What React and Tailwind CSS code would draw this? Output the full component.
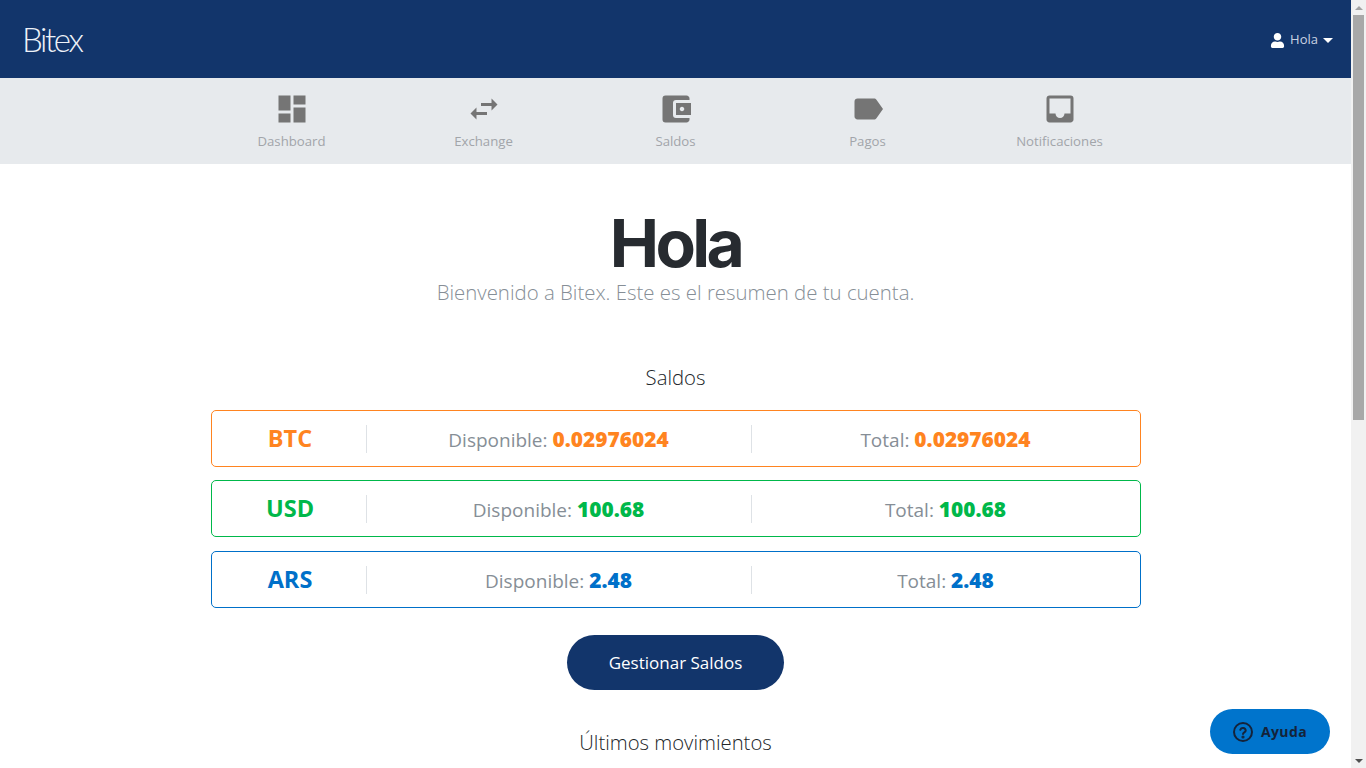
import React from "react";
import { MdDashboard, MdSwapHoriz, MdAccountBalanceWallet, MdLabel, MdInbox } from "react-icons/md";
import { FaUser } from "react-icons/fa";

const nav = [
  ["Dashboard", MdDashboard],
  ["Exchange", MdSwapHoriz],
  ["Saldos", MdAccountBalanceWallet],
  ["Pagos", MdLabel],
  ["Notificaciones", MdInbox],
];

const rows = [
  { c: "BTC", v: "0.02976024", border: "border-[#ff8420] mb-[13px]", text: "text-[#ff8420]" },
  { c: "USD", v: "100.68", border: "border-[#00b84a] mb-[14px]", text: "text-[#00b84a]" },
  { c: "ARS", v: "2.48", border: "border-[#0070c9]", text: "text-[#0070c9]" },
];

export default function App() {
  return (
    <div className="h-screen overflow-hidden pr-[15px] bg-white font-['Open_Sans',sans-serif]">
      <header className="h-[78px] bg-[#12356b] flex items-center justify-between pl-[22px] pr-[18px]">
        <span className="font-['Lato',sans-serif] font-light text-[33px] leading-none tracking-[-2.4px] text-[#eef2f8]">Bitex</span>
        <div className="flex items-center text-white text-[13px] mt-[2px]">
          <FaUser size={15} className="mr-[5px]" />
          <span className="text-[#c9d3e2]">Hola</span>
          <span className="ml-[5px] w-0 h-0 border-x-[5px] border-x-transparent border-t-[5px] border-t-white" />
        </div>
      </header>
      <nav className="h-[86px] bg-[#e7eaed] flex justify-center">
        {nav.map(([label, Icon]) => (
          <div key={label} className="w-[192px] flex flex-col items-center pt-[13px]">
            <Icon size={36} className="text-[#757575]" />
            <span className="text-[13.2px] leading-[18px] mt-[5px] text-[#a2a5aa]">{label}</span>
          </div>
        ))}
      </nav>
      <main className="flex flex-col items-center">
        <h1 className="mt-[39px] font-['Inter',sans-serif] font-bold text-[66px] leading-[80px] tracking-[-0.055em] text-[#272b30]">Hola</h1>
        <p className="font-light text-[20.4px] leading-[30px] text-[#868e96] -mt-[6px]">Bienvenido a Bitex. Este es el resumen de tu cuenta.</p>
        <h2 className="mt-[55px] font-light text-[20.3px] leading-[30px] text-[#212529]">Saldos</h2>
        <div className="mt-[18px] w-[930px] flex flex-col">
          {rows.map((r) => (
            <div key={r.c} className={`h-[57px] border rounded-[5px] grid grid-cols-[155px_385px_1fr] items-center text-[19px] ${r.border}`}>
              <div className={`h-[28px] pl-[3px] flex items-center justify-center border-r border-[#dee2e6] text-[23.5px] font-bold ${r.text}`}>{r.c}</div>
              <div className="h-[28px] pt-[2px] flex items-center justify-center border-r border-[#dee2e6] text-[#868e96]">
                <span>Disponible: <b className={`font-extrabold text-[20.9px] ${r.text}`}>{r.v}</b></span>
              </div>
              <div className="h-[28px] pt-[2px] flex items-center justify-center text-[#868e96]">
                <span>Total: <b className={`font-extrabold text-[20.9px] ${r.text}`}>{r.v}</b></span>
              </div>
            </div>
          ))}
        </div>
        <button className="mt-[27px] w-[217px] h-[55px] rounded-full bg-[#12356b] text-white text-[17px]">Gestionar Saldos</button>
        <h2 className="mt-[37px] font-light text-[20.3px] leading-[30px] text-[#212529]">Últimos movimientos</h2>
      </main>
      <button className="fixed right-[36px] bottom-[14px] w-[120px] h-[45px] rounded-full bg-[#0074cc] flex items-center justify-center gap-[8px] text-[#14233a] text-[14px] font-bold tracking-[0.03em]">
        <svg width="20" height="20" viewBox="0 0 20 20" fill="none" stroke="currentColor" strokeWidth="2">
          <circle cx="10" cy="10" r="9" />
          <path d="M7.3 7.8a2.8 2.8 0 0 1 5.4.6c0 1.8-2.7 2-2.7 3.6" strokeLinecap="round" />
          <circle cx="10" cy="15" r="0.6" fill="currentColor" />
        </svg>
        Ayuda
      </button>
      <div className="fixed right-0 inset-y-0 w-[15px] bg-[#f1f1f1] flex flex-col items-center">
        <div className="h-[15px] flex items-center justify-center shrink-0">
          <span className="w-0 h-0 border-x-[4px] border-x-transparent border-b-[4px] border-b-[#a3a3a3]" />
        </div>
        <div className="w-[11px] h-[405px] bg-[#a8a8a8]" />
        <div className="flex-1" />
        <div className="h-[15px] flex items-center justify-center shrink-0">
          <span className="w-0 h-0 border-x-[4px] border-x-transparent border-t-[4px] border-t-[#505050]" />
        </div>
      </div>
    </div>
  );
}
